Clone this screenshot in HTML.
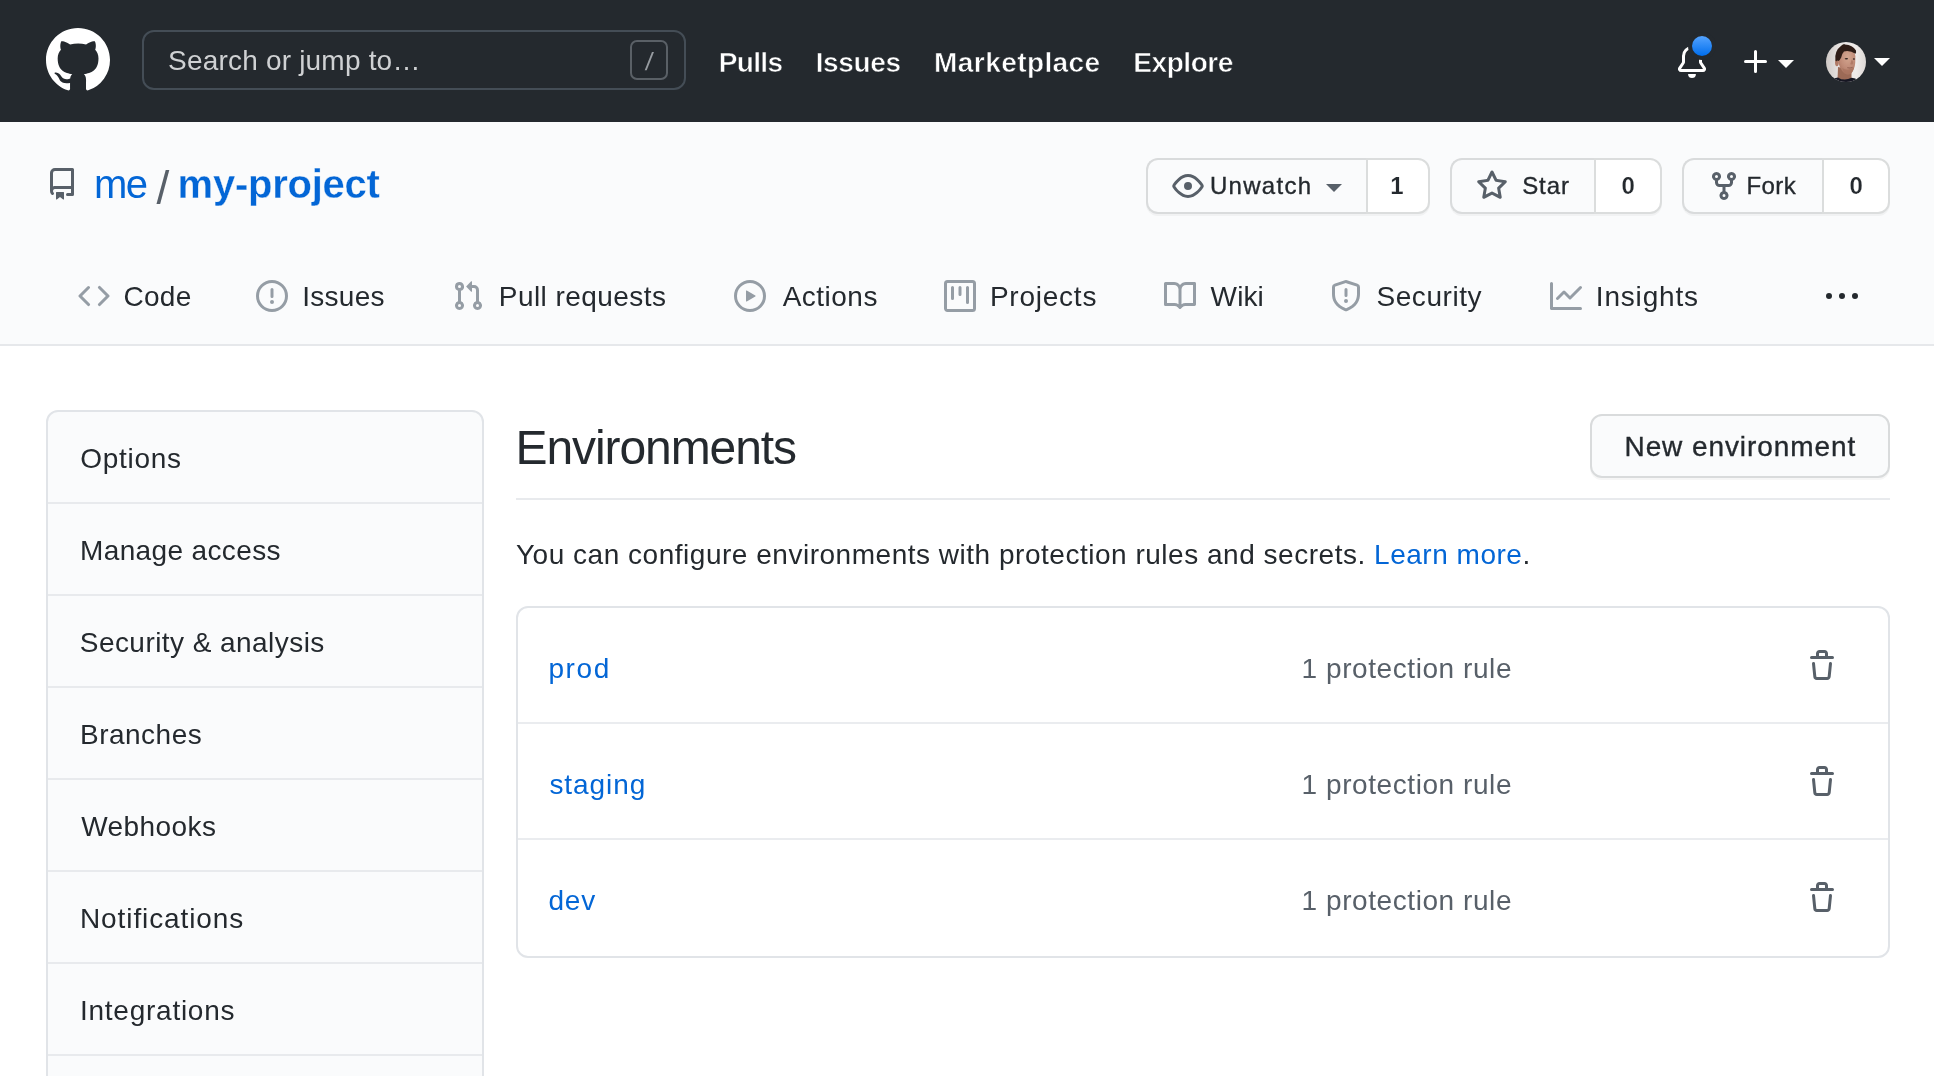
<!DOCTYPE html>
<html lang="en">
<head>
<meta charset="utf-8">
<title>Environments · me/my-project</title>
<style>
html,body{margin:0;padding:0}
body{will-change:transform;width:1934px;height:1076px;overflow:hidden;background:#fff;position:relative;font-family:"Liberation Sans",Arial,sans-serif;color:#24292e;-webkit-font-smoothing:antialiased}
*{box-sizing:border-box}
.t{position:absolute;white-space:nowrap;margin:0;padding:0;font-weight:400;text-decoration:none;display:block}
.t a{color:#0366d6}
.b{font-weight:700}
header .b{-webkit-text-stroke:0.55px #24292e}
h1 .b{-webkit-text-stroke:0.3px #fafbfc}
span.b{-webkit-text-stroke:0.2px #fff}
.mid{-webkit-text-stroke:0.35px currentColor}
.i{position:absolute;display:block}
.abs{position:absolute}
header{position:absolute;left:0;top:0;width:1934px;height:122px;background:#24292e}
.search{position:absolute;left:142px;top:30px;width:544px;height:60px;border:2px solid #444d56;border-radius:12px;background:#24292e}
.key{position:absolute;left:630px;top:40px;width:38px;height:40px;border:2px solid #5a6066;border-radius:7px}
kbd{font-family:inherit;transform:skewX(-7deg);transform-origin:50% 75%}
.caret{position:absolute;width:0;height:0;border:8px solid transparent;border-bottom-width:0;border-top-color:#fff}
.dot{position:absolute;left:1688px;top:32px;width:28px;height:28px;border-radius:50%;border:4px solid #24292e;background:linear-gradient(#54a3ff,#006eed)}
.repohead{position:absolute;left:0;top:122px;width:1934px;height:224px;background:#fafbfc;border-bottom:2px solid #e6e8eb}
.btn{position:absolute;border:2px solid #d9dbdc;border-radius:12px;background:#fafbfc;box-shadow:0 2px 0 rgba(27,31,35,.04)}
.cnt{position:absolute;top:158px;height:56px;background:#fff;border:2px solid #dbdddd;border-radius:0 12px 12px 0;box-shadow:0 2px 0 rgba(27,31,35,.04)}
.bl{border-radius:12px 0 0 12px;border-right:0}
.menu{position:absolute;left:46px;top:410px;width:438px;height:700px;border:2px solid #e1e4e8;border-radius:12px;background:#fafbfc}
.menu i{position:absolute;left:0;width:434px;height:2px;background:#e8eaed}
.hr{position:absolute;left:516px;top:498px;width:1374px;height:2px;background:#e8eaed}
.box{position:absolute;left:516px;top:606px;width:1374px;height:352px;border:2px solid #e1e4e8;border-radius:12px;background:#fff}
.box i{position:absolute;left:0;width:1370px;height:2px;background:#eaecef}
</style>
</head>
<body>

<header>
<svg class="i" style="left:46px;top:27.5px" width="64" height="64" viewBox="0 0 16 16" fill="#fff"><path fill-rule="evenodd" d="M8 0C3.58 0 0 3.58 0 8c0 3.54 2.29 6.53 5.47 7.59.4.07.55-.17.55-.38 0-.19-.01-.82-.01-1.49-2.01.37-2.53-.49-2.69-.94-.09-.23-.48-.94-.82-1.13-.28-.15-.68-.52-.01-.53.63-.01 1.08.58 1.23.82.72 1.21 1.87.87 2.33.66.07-.52.28-.87.51-1.07-1.78-.2-3.64-.89-3.64-3.95 0-.87.31-1.59.82-2.15-.08-.2-.36-1.02.08-2.12 0 0 .67-.21 2.2.82.64-.18 1.32-.27 2-.27.68 0 1.36.09 2 .27 1.53-1.04 2.2-.82 2.2-.82.44 1.1.16 1.92.08 2.12.51.56.82 1.27.82 2.15 0 3.07-1.87 3.75-3.65 3.95.29.25.54.73.54 1.48 0 1.07-.01 1.93-.01 2.2 0 .21.15.46.55.38A8.013 8.013 0 0016 8c0-4.42-3.58-8-8-8z"/></svg>
<div class="search"></div>
<span class="t" style="left:168.0px;top:44px;font-size:28px;line-height:34px;letter-spacing:0.200px;color:#cfd1d3">Search or jump to…</span>
<div class="key"></div>
<kbd class="t" style="left:644.5px;top:46px;font-size:25px;line-height:30px;letter-spacing:0.000px;color:#979ca1">/</kbd>
<nav><a class="t b" style="left:718.7px;top:46px;font-size:28px;line-height:34px;letter-spacing:-0.634px;color:#fff">Pulls</a><a class="t b" style="left:815.7px;top:46px;font-size:28px;line-height:34px;letter-spacing:-0.380px;color:#fff">Issues</a><a class="t b" style="left:934.1px;top:46px;font-size:28px;line-height:34px;letter-spacing:0.421px;color:#fff">Marketplace</a><a class="t b" style="left:1133.3px;top:46px;font-size:28px;line-height:34px;letter-spacing:-0.438px;color:#fff">Explore</a></nav>
<svg class="i" style="left:1676px;top:46px" width="32" height="32" viewBox="0 0 16 16" fill="#fff"><path fill-rule="evenodd" d="M8 16a2 2 0 001.985-1.75c.017-.137-.097-.25-.235-.25h-3.5c-.138 0-.252.113-.235.25A2 2 0 008 16zM8 1.5A3.5 3.5 0 004.5 5v2.947c0 .346-.102.683-.294.97l-1.703 2.556a.018.018 0 00-.003.01l.001.006c0 .002.002.004.004.006a.017.017 0 00.006.004l.007.001h10.964l.007-.001a.016.016 0 00.006-.004.016.016 0 00.004-.006l.001-.007a.017.017 0 00-.003-.01l-1.703-2.554a1.75 1.75 0 01-.294-.97V5A3.5 3.5 0 008 1.5zM3 5a5 5 0 0110 0v2.947c0 .05.015.098.042.139l1.703 2.555A1.518 1.518 0 0113.482 13H2.518a1.518 1.518 0 01-1.263-2.36l1.703-2.554A.25.25 0 003 7.947V5z"/></svg>
<div class="dot"></div>
<svg class="i" style="left:1740px;top:46px" width="32" height="32" viewBox="0 0 16 16" fill="#fff"><path fill-rule="evenodd" d="M7.75 2a.75.75 0 01.75.75V7h4.25a.75.75 0 110 1.5H8.5v4.25a.75.75 0 11-1.5 0V8.5H2.75a.75.75 0 010-1.5H7V2.75A.75.75 0 017.75 2z"/></svg>
<div class="caret" style="left:1778px;top:60px"></div>
<svg class="i" style="left:1826px;top:42px" width="40" height="40" viewBox="0 0 40 40">
<defs><clipPath id="avc"><circle cx="20" cy="20" r="20"/></clipPath>
<filter id="avb" x="-10" y="-10" width="60" height="60" filterUnits="userSpaceOnUse"><feGaussianBlur stdDeviation="0.55"/></filter>
<filter id="avb2" x="-10" y="-10" width="60" height="60" filterUnits="userSpaceOnUse"><feGaussianBlur stdDeviation="0.4"/></filter>
<linearGradient id="avg" x1="0" x2="1"><stop offset="0" stop-color="#cfc9c6"/><stop offset=".35" stop-color="#e9e5e3"/><stop offset=".75" stop-color="#efebe9"/><stop offset="1" stop-color="#ddd8d6"/></linearGradient>
<radialGradient id="avf" cx="0.55" cy="0.3" r="0.75"><stop offset="0" stop-color="#d3a690"/><stop offset=".6" stop-color="#c08b77"/><stop offset="1" stop-color="#a5705c"/></radialGradient></defs>
<g clip-path="url(#avc)"><rect width="40" height="40" fill="url(#avg)"/>
<g filter="url(#avb)">
<path d="M12 25 L11.5 38 L25.5 38 L25.5 28Z" fill="#9c6a57"/>
<path d="M6 41 L8.6 36.2 L12 35.4 Q18 39.6 25.6 35.8 L29.4 36.4 L33 41Z" fill="#171924"/>
<ellipse cx="10.9" cy="20.6" rx="1.9" ry="3.6" fill="#b07a66"/>
<path d="M12.4 13 Q13 7 21 7.2 Q29 7.5 29.4 14 L29.2 21 Q28.6 28.5 24.5 31.8 Q21.5 33.6 18 31 Q13.4 26.5 12.4 20Z" fill="url(#avf)"/>
<path d="M16 26 Q21.5 29.5 28 25.5 Q27 30.5 24 32.2 Q21 33.4 18.4 31.2Z" fill="#a8735f" opacity=".75"/>
<path d="M9.4 18.6 Q8.2 9 15.2 3.8 Q17.8 1.4 19 2.4 Q26.5 2.8 30 8.4 Q30.4 10.6 29.5 11.8 Q24 8 18 9.4 Q15.8 11.6 15.2 15.6 Q14 18.2 12.6 19 Q11 18 10.4 19.4Z" fill="#2f1f18"/>
</g>
<g filter="url(#avb2)">
<ellipse cx="20.4" cy="16.8" rx="1.7" ry=".75" fill="#33241f"/><ellipse cx="27.9" cy="17" rx="1.1" ry=".7" fill="#33241f"/>
<path d="M25.8 17.5 Q28 20.5 26.8 22.2 Q25.4 22.8 24.2 22.2Z" fill="#b07a66"/>
<path d="M21.3 25.7 Q24 26.5 26.6 25.4" stroke="#8a574a" stroke-width=".8" fill="none"/>
</g></g></svg>
<div class="caret" style="left:1874px;top:58px"></div>
</header>
<div class="repohead"></div>
<svg class="i" style="left:46px;top:168px" width="32" height="32" viewBox="0 0 16 16" fill="#586069"><path fill-rule="evenodd" d="M2 2.5A2.5 2.5 0 014.5 0h8.75a.75.75 0 01.75.75v12.5a.75.75 0 01-.75.75h-2.5a.75.75 0 110-1.5h1.75v-2h-8a1 1 0 00-.714 1.7.75.75 0 01-1.072 1.05A2.495 2.495 0 012 11.5v-9zm10.5-1V9h-8c-.356 0-.694.074-1 .208V2.5a1 1 0 011-1h8zM5 12.25v3.25a.25.25 0 00.4.2l1.45-1.087a.25.25 0 01.3 0L8.6 15.7a.25.25 0 00.4-.2v-3.25a.25.25 0 00-.25-.25h-3.5a.25.25 0 00-.25.25z"/></svg>
<h1 style="margin:0"><a class="t" style="left:94.0px;top:160px;font-size:40px;line-height:48px;letter-spacing:-1.520px;color:#0366d6">me</a><span class="t" style="left:156.4px;top:161px;font-size:46px;line-height:55px;letter-spacing:0.000px;color:#586069">/</span><a class="t b" style="left:177.6px;top:160px;font-size:40px;line-height:48px;letter-spacing:-0.252px;color:#0366d6">my-project</a></h1>
<div class="btn bl" style="left:1146px;top:158px;width:220px;height:56px"></div><div class="cnt" style="left:1366px;width:64px"></div>
<svg class="i" style="left:1172px;top:170px" width="32" height="32" viewBox="0 0 16 16" fill="#586069"><path fill-rule="evenodd" d="M1.679 7.932c.412-.621 1.242-1.75 2.366-2.717C5.175 4.242 6.527 3.5 8 3.5c1.473 0 2.824.742 3.955 1.715 1.124.967 1.954 2.096 2.366 2.717a.119.119 0 010 .136c-.412.621-1.242 1.75-2.366 2.717C10.825 11.758 9.473 12.5 8 12.5c-1.473 0-2.824-.742-3.955-1.715C2.92 9.818 2.09 8.69 1.679 8.068a.119.119 0 010-.136zM8 2c-1.981 0-3.67.992-4.933 2.078C1.797 5.169.88 6.423.43 7.1a1.619 1.619 0 000 1.798c.45.678 1.367 1.932 2.637 3.024C4.329 13.008 6.019 14 8 14c1.981 0 3.67-.992 4.933-2.078 1.27-1.091 2.187-2.345 2.637-3.023a1.619 1.619 0 000-1.798c-.45-.678-1.367-1.932-2.637-3.023C11.671 2.992 9.981 2 8 2zm0 8a2 2 0 100-4 2 2 0 000 4z"/></svg>
<span class="t mid" style="left:1209.9px;top:171px;font-size:24px;line-height:29px;letter-spacing:1.312px;color:#24292e">Unwatch</span>
<div class="caret" style="left:1326px;top:184px;border-top-color:#586069"></div>
<span class="t b" style="left:1390.3px;top:171px;font-size:24px;line-height:29px;letter-spacing:0.000px;color:#24292e">1</span>
<div class="btn bl" style="left:1450px;top:158px;width:144px;height:56px"></div><div class="cnt" style="left:1594px;width:68px"></div>
<svg class="i" style="left:1476px;top:170px" width="32" height="32" viewBox="0 0 16 16" fill="#586069"><path fill-rule="evenodd" d="M8 .25a.75.75 0 01.673.418l1.882 3.815 4.21.612a.75.75 0 01.416 1.279l-3.046 2.97.719 4.192a.75.75 0 01-1.088.791L8 12.347l-3.766 1.98a.75.75 0 01-1.088-.79l.72-4.194L.818 6.374a.75.75 0 01.416-1.28l4.21-.611L7.327.668A.75.75 0 018 .25zm0 2.445L6.615 5.5a.75.75 0 01-.564.41l-3.097.45 2.24 2.184a.75.75 0 01.216.664l-.528 3.084 2.769-1.456a.75.75 0 01.698 0l2.77 1.456-.53-3.084a.75.75 0 01.216-.664l2.24-2.183-3.096-.45a.75.75 0 01-.564-.41L8 2.694v.001z"/></svg>
<span class="t mid" style="left:1522.2px;top:171px;font-size:24px;line-height:29px;letter-spacing:0.926px;color:#24292e">Star</span>
<span class="t b" style="left:1621.4px;top:171px;font-size:24px;line-height:29px;letter-spacing:0.000px;color:#24292e">0</span>
<div class="btn bl" style="left:1682px;top:158px;width:140px;height:56px"></div><div class="cnt" style="left:1822px;width:68px"></div>
<svg class="i" style="left:1708px;top:170px" width="32" height="32" viewBox="0 0 16 16" fill="#586069"><path fill-rule="evenodd" d="M5 3.25a.75.75 0 11-1.5 0 .75.75 0 011.5 0zm0 2.122a2.25 2.25 0 10-1.5 0v.878A2.25 2.25 0 005.75 8.5h1.5v2.128a2.251 2.251 0 101.5 0V8.5h1.5a2.25 2.25 0 002.25-2.25v-.878a2.25 2.25 0 10-1.5 0v.878a.75.75 0 01-.75.75h-4.5A.75.75 0 015 6.25v-.878zm3.75 7.378a.75.75 0 11-1.5 0 .75.75 0 011.5 0zm3-8.75a.75.75 0 100-1.5.75.75 0 000 1.5z"/></svg>
<span class="t mid" style="left:1746.6px;top:171px;font-size:24px;line-height:29px;letter-spacing:0.367px;color:#24292e">Fork</span>
<span class="t b" style="left:1849.5px;top:171px;font-size:24px;line-height:29px;letter-spacing:0.000px;color:#24292e">0</span>
<nav>
<svg class="i" style="left:78px;top:280px" width="32" height="32" viewBox="0 0 16 16" fill="#959da5"><path fill-rule="evenodd" d="M4.72 3.22a.75.75 0 011.06 1.06L2.06 8l3.72 3.72a.75.75 0 11-1.06 1.06L.47 8.53a.75.75 0 010-1.06l4.25-4.25zm6.56 0a.75.75 0 10-1.06 1.06L13.94 8l-3.72 3.72a.75.75 0 101.06 1.06l4.25-4.25a.75.75 0 000-1.06l-4.25-4.25z"/></svg>
<a class="t" style="left:123.5px;top:280px;font-size:28px;line-height:34px;letter-spacing:0.278px;color:#24292e">Code</a>
<svg class="i" style="left:256px;top:280px" width="32" height="32" viewBox="0 0 16 16" fill="#959da5"><path fill-rule="evenodd" d="M8 1.5a6.5 6.5 0 100 13 6.5 6.5 0 000-13zM0 8a8 8 0 1116 0A8 8 0 010 8zm9 3a1 1 0 11-2 0 1 1 0 012 0zm-.25-6.25a.75.75 0 00-1.5 0v3.5a.75.75 0 001.5 0v-3.5z"/></svg>
<a class="t" style="left:302.2px;top:280px;font-size:28px;line-height:34px;letter-spacing:0.295px;color:#24292e">Issues</a>
<svg class="i" style="left:452px;top:280px" width="32" height="32" viewBox="0 0 16 16" fill="#959da5"><path fill-rule="evenodd" d="M7.177 3.073L9.573.677A.25.25 0 0110 .854v4.792a.25.25 0 01-.427.177L7.177 3.427a.25.25 0 010-.354zM3.75 2.5a.75.75 0 100 1.5.75.75 0 000-1.5zm-2.25.75a2.25 2.25 0 113 2.122v5.256a2.251 2.251 0 11-1.5 0V5.372A2.25 2.25 0 011.5 3.25zM11 2.5h-1V4h1a1 1 0 011 1v5.628a2.251 2.251 0 101.5 0V5A2.5 2.5 0 0011 2.5zm1 10.25a.75.75 0 111.5 0 .75.75 0 01-1.5 0zM3.75 12a.75.75 0 100 1.5.75.75 0 000-1.5z"/></svg>
<a class="t" style="left:498.8px;top:280px;font-size:28px;line-height:34px;letter-spacing:0.437px;color:#24292e">Pull requests</a>
<svg class="i" style="left:734px;top:280px" width="32" height="32" viewBox="0 0 16 16" fill="#959da5"><path fill-rule="evenodd" d="M1.5 8a6.5 6.5 0 1113 0 6.5 6.5 0 01-13 0zM8 0a8 8 0 100 16A8 8 0 008 0zM6.379 5.227A.25.25 0 006 5.442v5.117a.25.25 0 00.379.214l4.264-2.559a.25.25 0 000-.428L6.379 5.227z"/></svg>
<a class="t" style="left:782.7px;top:280px;font-size:28px;line-height:34px;letter-spacing:0.480px;color:#24292e">Actions</a>
<svg class="i" style="left:944px;top:280px" width="32" height="32" viewBox="0 0 16 16" fill="#959da5"><path fill-rule="evenodd" d="M1.75 0A1.75 1.75 0 000 1.75v12.5C0 15.216.784 16 1.75 16h12.5A1.75 1.75 0 0016 14.25V1.75A1.75 1.75 0 0014.25 0H1.75zM1.5 1.75a.25.25 0 01.25-.25h12.5a.25.25 0 01.25.25v12.5a.25.25 0 01-.25.25H1.75a.25.25 0 01-.25-.25V1.75zM11.75 3a.75.75 0 00-.75.75v7.5a.75.75 0 001.5 0v-7.5a.75.75 0 00-.75-.75zm-8.25.75a.75.75 0 011.5 0v5.5a.75.75 0 01-1.5 0v-5.5zM8 3a.75.75 0 00-.75.75v3.5a.75.75 0 001.5 0v-3.5A.75.75 0 008 3z"/></svg>
<a class="t" style="left:989.9px;top:280px;font-size:28px;line-height:34px;letter-spacing:0.765px;color:#24292e">Projects</a>
<svg class="i" style="left:1164px;top:280px" width="32" height="32" viewBox="0 0 16 16" fill="#959da5"><path fill-rule="evenodd" d="M0 1.75A.75.75 0 01.75 1h4.253c1.227 0 2.317.59 3 1.501A3.744 3.744 0 0111.006 1h4.245a.75.75 0 01.75.75v10.5a.75.75 0 01-.75.75h-4.507a2.25 2.25 0 00-1.591.659l-.622.621a.75.75 0 01-1.06 0l-.622-.621A2.25 2.25 0 005.258 13H.75a.75.75 0 01-.75-.75V1.75zm8.755 3a2.25 2.25 0 012.25-2.25H14.5v9h-3.757c-.71 0-1.4.201-1.992.572l.004-7.322zm-1.504 7.324l.004-5.073-.002-2.253A2.25 2.25 0 005.003 2.5H1.5v9h3.757a3.75 3.75 0 011.994.574z"/></svg>
<a class="t" style="left:1210.6px;top:280px;font-size:28px;line-height:34px;letter-spacing:0.117px;color:#24292e">Wiki</a>
<svg class="i" style="left:1330px;top:280px" width="32" height="32" viewBox="0 0 16 16" fill="#959da5"><path fill-rule="evenodd" d="M7.467.133a1.75 1.75 0 011.066 0l5.25 1.68A1.75 1.75 0 0115 3.48V7c0 1.566-.32 3.182-1.303 4.682-.983 1.498-2.585 2.813-5.032 3.855a1.7 1.7 0 01-1.33 0c-2.447-1.042-4.049-2.357-5.032-3.855C1.32 10.182 1 8.566 1 7V3.48a1.75 1.75 0 011.217-1.667l5.25-1.68zm.61 1.429a.25.25 0 00-.153 0l-5.25 1.68a.25.25 0 00-.174.238V7c0 1.358.275 2.666 1.057 3.86.784 1.194 2.121 2.34 4.366 3.297a.2.2 0 00.154 0c2.245-.956 3.582-2.104 4.366-3.298C13.225 9.666 13.5 8.36 13.5 7V3.48a.25.25 0 00-.174-.237l-5.25-1.68zM9 10.5a1 1 0 11-2 0 1 1 0 012 0zm-.25-5.75a.75.75 0 10-1.5 0v3a.75.75 0 001.5 0v-3z"/></svg>
<a class="t" style="left:1376.4px;top:280px;font-size:28px;line-height:34px;letter-spacing:0.579px;color:#24292e">Security</a>
<svg class="i" style="left:1550px;top:280px" width="32" height="32" viewBox="0 0 16 16" fill="#959da5"><path fill-rule="evenodd" d="M1.5 1.75a.75.75 0 00-1.5 0v12.5c0 .414.336.75.75.75h14.5a.75.75 0 000-1.5H1.5V1.75zm14.28 2.53a.75.75 0 00-1.06-1.06L10 7.94 7.53 5.47a.75.75 0 00-1.06 0L3.22 8.72a.75.75 0 001.06 1.06L7 7.06l2.47 2.47a.75.75 0 001.06 0l5.25-5.25z"/></svg>
<a class="t" style="left:1595.8px;top:280px;font-size:28px;line-height:34px;letter-spacing:0.815px;color:#24292e">Insights</a>
<svg class="i" style="left:1825.5px;top:281.4px" width="32" height="32" viewBox="0 0 16 16" fill="#24292e"><path fill-rule="evenodd" d="M8 9a1.5 1.5 0 100-3 1.5 1.5 0 000 3zM1.5 9a1.5 1.5 0 100-3 1.5 1.5 0 000 3zm13 0a1.5 1.5 0 100-3 1.5 1.5 0 000 3z"/></svg>
</nav>
<div class="menu"><i style="top:90px"></i><i style="top:182px"></i><i style="top:274px"></i><i style="top:366px"></i><i style="top:458px"></i><i style="top:550px"></i><i style="top:642px"></i></div>
<a class="t" style="left:80.2px;top:442px;font-size:28px;line-height:34px;letter-spacing:0.717px;color:#24292e">Options</a>
<a class="t" style="left:80.0px;top:534px;font-size:28px;line-height:34px;letter-spacing:0.366px;color:#24292e">Manage access</a>
<a class="t" style="left:79.8px;top:626px;font-size:28px;line-height:34px;letter-spacing:0.442px;color:#24292e">Security & analysis</a>
<a class="t" style="left:80.0px;top:718px;font-size:28px;line-height:34px;letter-spacing:0.487px;color:#24292e">Branches</a>
<a class="t" style="left:81.2px;top:810px;font-size:28px;line-height:34px;letter-spacing:0.417px;color:#24292e">Webhooks</a>
<a class="t" style="left:80.0px;top:902px;font-size:28px;line-height:34px;letter-spacing:0.899px;color:#24292e">Notifications</a>
<a class="t" style="left:80.0px;top:994px;font-size:28px;line-height:34px;letter-spacing:0.744px;color:#24292e">Integrations</a>
<h2 class="t" style="left:515.5px;top:419px;font-size:48px;line-height:58px;letter-spacing:-1.087px;color:#24292e">Environments</h2>
<div class="btn" style="left:1590px;top:414px;width:300px;height:64px"></div>
<span class="t mid" style="left:1624.5px;top:430px;font-size:28px;line-height:34px;letter-spacing:0.915px;color:#24292e">New environment</span>
<div class="hr"></div>
<p class="t" style="left:516.0px;top:538px;font-size:28px;line-height:34px;letter-spacing:0.518px;color:#24292e">You can configure environments with protection rules and secrets. <a>Learn more</a>.</p>
<div class="box"><i style="top:114px"></i><i style="top:230px"></i></div>
<a class="t" style="left:548.4px;top:652px;font-size:28px;line-height:34px;letter-spacing:1.610px;color:#0366d6">prod</a>
<span class="t" style="left:1301.6px;top:652px;font-size:28px;line-height:34px;letter-spacing:0.568px;color:#586069">1 protection rule</span>
<svg class="i" style="left:1806px;top:650px" width="32" height="32" viewBox="0 0 16 16" fill="#586069"><path fill-rule="evenodd" d="M6.5 1.75a.25.25 0 01.25-.25h2.5a.25.25 0 01.25.25V3h-3V1.75zm4.5 0V3h2.25a.75.75 0 010 1.5H2.75a.75.75 0 010-1.5H5V1.75C5 .784 5.784 0 6.75 0h2.5C10.216 0 11 .784 11 1.75zM4.496 6.675a.75.75 0 10-1.492.15l.66 6.6A1.75 1.75 0 005.405 15h5.19c.9 0 1.652-.681 1.741-1.576l.66-6.6a.75.75 0 00-1.492-.149l-.66 6.6a.25.25 0 01-.249.225h-5.19a.25.25 0 01-.249-.225l-.66-6.6z"/></svg>
<a class="t" style="left:549.4px;top:768px;font-size:28px;line-height:34px;letter-spacing:0.931px;color:#0366d6">staging</a>
<span class="t" style="left:1301.6px;top:768px;font-size:28px;line-height:34px;letter-spacing:0.568px;color:#586069">1 protection rule</span>
<svg class="i" style="left:1806px;top:766px" width="32" height="32" viewBox="0 0 16 16" fill="#586069"><path fill-rule="evenodd" d="M6.5 1.75a.25.25 0 01.25-.25h2.5a.25.25 0 01.25.25V3h-3V1.75zm4.5 0V3h2.25a.75.75 0 010 1.5H2.75a.75.75 0 010-1.5H5V1.75C5 .784 5.784 0 6.75 0h2.5C10.216 0 11 .784 11 1.75zM4.496 6.675a.75.75 0 10-1.492.15l.66 6.6A1.75 1.75 0 005.405 15h5.19c.9 0 1.652-.681 1.741-1.576l.66-6.6a.75.75 0 00-1.492-.149l-.66 6.6a.25.25 0 01-.249.225h-5.19a.25.25 0 01-.249-.225l-.66-6.6z"/></svg>
<a class="t" style="left:548.4px;top:884px;font-size:28px;line-height:34px;letter-spacing:0.878px;color:#0366d6">dev</a>
<span class="t" style="left:1301.6px;top:884px;font-size:28px;line-height:34px;letter-spacing:0.568px;color:#586069">1 protection rule</span>
<svg class="i" style="left:1806px;top:882px" width="32" height="32" viewBox="0 0 16 16" fill="#586069"><path fill-rule="evenodd" d="M6.5 1.75a.25.25 0 01.25-.25h2.5a.25.25 0 01.25.25V3h-3V1.75zm4.5 0V3h2.25a.75.75 0 010 1.5H2.75a.75.75 0 010-1.5H5V1.75C5 .784 5.784 0 6.75 0h2.5C10.216 0 11 .784 11 1.75zM4.496 6.675a.75.75 0 10-1.492.15l.66 6.6A1.75 1.75 0 005.405 15h5.19c.9 0 1.652-.681 1.741-1.576l.66-6.6a.75.75 0 00-1.492-.149l-.66 6.6a.25.25 0 01-.249.225h-5.19a.25.25 0 01-.249-.225l-.66-6.6z"/></svg>
</body></html>
